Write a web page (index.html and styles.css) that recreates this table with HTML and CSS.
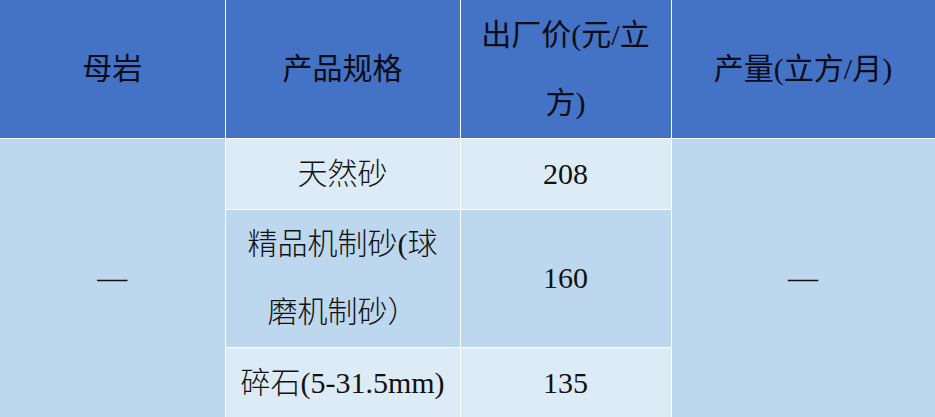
FILE: index.html
```html
<!DOCTYPE html>
<html lang="zh">
<head>
<meta charset="utf-8">
<link rel="stylesheet" href="styles.css">
</head>
<body>
<table class="spec">
  <colgroup>
    <col class="c1"><col class="c2"><col class="c3"><col class="c4">
  </colgroup>
  <thead>
    <tr class="head">
      <th>母岩</th>
      <th>产品规格</th>
      <th>出厂价(元/立方)</th>
      <th>产量(立方/月)</th>
    </tr>
  </thead>
  <tbody>
    <tr class="r1">
      <td class="dim" rowspan="3">—</td>
      <td class="light">天然砂</td>
      <td class="light">208</td>
      <td class="dim" rowspan="3">—</td>
    </tr>
    <tr class="r2">
      <td class="dim">精品机制砂(球磨机制砂）</td>
      <td class="dim">160</td>
    </tr>
    <tr class="r3">
      <td class="light">碎石(5-31.5mm)</td>
      <td class="light">135</td>
    </tr>
  </tbody>
</table>
</body>
</html>
```

FILE: styles.css
```css
html, body {
  margin: 0;
  padding: 0;
  background: #ffffff;
}

.spec {
  width: 935px;
  table-layout: fixed;
  border-collapse: collapse;
  font-family: "Liberation Serif", "Noto Sans CJK SC", serif;
  font-size: 30px;
  color: #111111;
}

.c1 { width: 225px; }
.c2 { width: 235px; }
.c3 { width: 211px; }
.c4 { width: 264px; }

.spec th,
.spec td {
  border: 1px solid #ffffff;
  padding: 0 8px;
  text-align: center;
  vertical-align: middle;
  line-height: 68px;
}

.spec th {
  background: #4472c4;
  font-weight: normal;
  color: #0a0c18;
}

.spec td {
  font-weight: 300;
}

.head { height: 138px; }
.r1 { height: 71px; }
.r2 { height: 138px; }
.r3 { height: 71px; }

.spec td.dim { background: #bdd7ee; }
.spec td.light { background: #ddebf7; }

.spec tr:first-child th { border-top: none; }
.spec th:first-child, .spec td:first-child { border-left: none; }
```
